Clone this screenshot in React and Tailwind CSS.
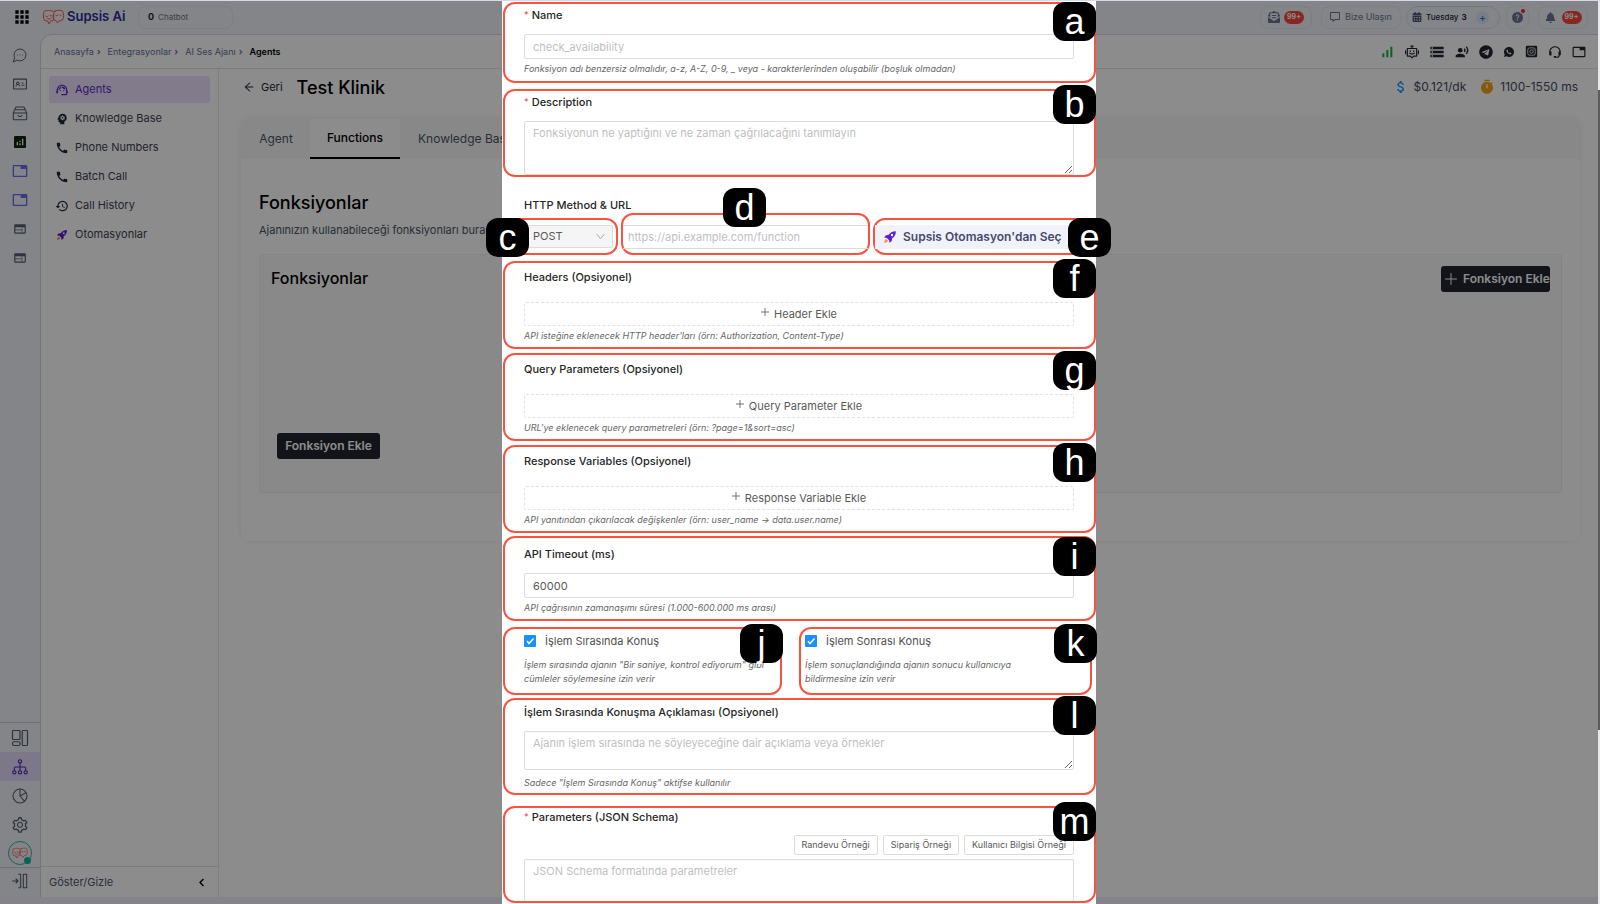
import { AiOutlineArrowLeft, AiOutlineIdcard, AiOutlineSetting } from 'react-icons/ai';
import { BiMessage, BiSupport } from 'react-icons/bi';
import { BsFillQuestionCircleFill } from 'react-icons/bs';
import { FaBell, FaCalendarAlt, FaChevronLeft, FaEnvelopeOpenText, FaInstagramSquare, FaTelegram } from 'react-icons/fa';
import { LuMessageCircleMore } from 'react-icons/lu';
import {
    MdAnalytics,
    MdApps,
    MdAttachMoney,
    MdCall,
    MdHistory,
    MdPsychology,
    MdRecordVoiceOver,
    MdSignalCellularAlt,
    MdStorage,
    MdSupportAgent,
    MdTab,
    MdWeb,
} from 'react-icons/md';
import { RiTimerFill, RiWhatsappFill } from 'react-icons/ri';

function Rocket({ className }) {
    return (
        <svg viewBox="0 0 24 24" className={className} aria-hidden="true">
            <path d="M22 2c-6 0-10 2.5-12.600 6.500L5 9 2 13l4.500.6 4 4L11 22l4-3 .5-4.500C19.500 12 22 8 22 2Z" fill="#5b1fd6" />
            <circle cx="15.500" cy="8.500" r="2" fill="#fff" />
            <path d="M5.500 15.500C3 16.500 2.500 19 2 22c3-.5 5.500-1 6.500-3.500Z" fill="#f59331" />
        </svg>
    );
}

function Faces({ className }) {
    return (
        <svg viewBox="0 0 44 32" className={className} fill="none" stroke="#f4604c" strokeWidth="2" strokeLinejoin="round" strokeLinecap="round" aria-hidden="true">
            <path d="M22 5C16 2 8 3 4 4 1 8 1 18 4 23l6 1 3 6 3-6 5-1c2-4 2-8 1-12" />
            <path d="M25 4c5-2 12-2 15 0 3 5 3 13 0 18l-7 2-3 4-2-4-5-2c-3-5-2-13 2-18Z" />
            <path d="M6 14c1 2 4 2 5 0M15 13c1 2 3 2 4 0M10 19c2 2 5 2 7-1M26 12c1 2 4 2 5 0M34 12c1 2 3 2 4 0" />
        </svg>
    );
}

function Line({ className, children }) {
    return (
        <svg viewBox="0 0 24 24" className={className} fill="none" stroke="currentColor" strokeWidth="1.600" strokeLinecap="round" strokeLinejoin="round" aria-hidden="true">
            {children}
        </svg>
    );
}

const railTop = [
    { label: 'Mesajlar', icon: <LuMessageCircleMore className="size-4 stroke-[1.5]" /> },
    { label: 'Kişiler', icon: <AiOutlineIdcard className="size-4" /> },
    {
        label: 'Arşiv',
        icon: (
            <Line className="size-4">
                <path d="M6 3h12M4 7h16M2 12h20v9a1 1 0 0 1-1 1H3a1 1 0 0 1-1-1ZM2 12l2-5M22 12l-2-5M6 3 4 7M18 3l2 4M9 16c1 1.500 5 1.500 6 0" />
            </Line>
        ),
    },
    { label: 'Raporlar', icon: <MdAnalytics className="size-4 text-[#10240c]" /> },
    { label: 'Sekme 1', icon: <MdTab className="size-4 text-[#6a6ae8]" /> },
    { label: 'Sekme 2', icon: <MdTab className="size-4 text-[#6a6ae8]" /> },
    { label: 'Web 1', icon: <MdWeb className="size-[14px]" /> },
    { label: 'Web 2', icon: <MdWeb className="size-[14px]" /> },
];

const railBottom = [
    {
        label: 'Panel',
        icon: (
            <Line className="size-[18px]">
                <rect x="2" y="2" width="10" height="12" rx="1" />
                <rect x="2" y="17" width="10" height="5" rx="2" />
                <rect x="15" y="2" width="7" height="20" rx="1" />
            </Line>
        ),
    },
    {
        label: 'Entegrasyonlar',
        active: true,
        icon: (
            <Line className="size-4">
                <circle cx="12" cy="3.500" r="2.500" />
                <circle cx="3.500" cy="20" r="2.500" />
                <circle cx="12" cy="20" r="2.500" />
                <circle cx="20.500" cy="20" r="2.500" />
                <path d="M12 6v11.500M3.500 17.500V14q0-2 2-2h13q2 0 2 2v3.500" />
            </Line>
        ),
    },
    {
        label: 'İstatistik',
        icon: (
            <Line className="size-4">
                <circle cx="12" cy="12" r="10.500" />
                <path d="M12 1.500V12l7 8M12 12l9-5" />
            </Line>
        ),
    },
    { label: 'Ayarlar', icon: <AiOutlineSetting className="size-[18px]" /> },
];

const menu = [
    { label: 'Agents', icon: <MdSupportAgent className="size-[14px]" />, active: true },
    { label: 'Knowledge Base', icon: <MdPsychology className="size-[14px] text-gray-800" /> },
    { label: 'Phone Numbers', icon: <MdCall className="size-[14px] text-gray-800" /> },
    { label: 'Batch Call', icon: <MdCall className="size-[14px] text-gray-800" /> },
    { label: 'Call History', icon: <MdHistory className="size-[14px] text-gray-800" /> },
    { label: 'Otomasyonlar', icon: <Rocket className="size-3" /> },
];

function TopBar() {
    const pill = 'flex h-[23px] items-center rounded-lg border border-[#e3e7ee]';
    return (
        <header className="flex h-[34px] shrink-0 items-center pr-3 pl-3">
            <button aria-label="Uygulamalar">
                <MdApps className="size-5 text-black" />
            </button>
            <a href="#" className="ml-[10px] flex w-[84px] items-center gap-[2px] whitespace-nowrap">
                <Faces className="h-4 w-[23px]" />
                <span className="text-[13px] font-semibold text-[#2d2a9f]">Supsis Ai</span>
            </a>
            <div className={`${pill} ml-[12px] w-[95px] gap-1 px-[9px] text-[8px] text-gray-500`}>
                <b className="text-[9px] font-bold text-gray-800">0</b> Chatbot
            </div>
            <div className="ml-auto flex items-center gap-[9px] text-[#6c7690]">
                <button className={`${pill} w-[52px] justify-center gap-1`} aria-label="Gelen kutusu">
                    <FaEnvelopeOpenText className="size-3" />
                    <Count />
                </button>
                <button className={`${pill} w-[80px] gap-1 pl-[7px] text-[9px]`}>
                    <BiMessage className="size-3" />
                    Bize Ulaşın
                </button>
                <button className="-ml-[4px] flex h-[23px] w-[94px] items-center gap-1 rounded-full border border-[#d3dfee] pl-[5px] text-[8px] font-medium text-gray-800">
                    <FaCalendarAlt className="size-[10px] text-[#4b5672]" />
                    Tuesday <b className="-ml-px">3</b>
                    <span className="ml-auto mr-[10px] flex size-[13px] items-center justify-center rounded-full bg-[#dbe7fa] text-[10px] text-[#3d6bb8]">+</span>
                </button>
                <button className={`${pill} relative -ml-[3px] w-[23px] justify-center`} aria-label="Yardım">
                    <BsFillQuestionCircleFill className="size-[11px]" />
                    <span className="absolute top-[2px] right-[3px] size-1 rounded-full bg-[#f5222d]" />
                </button>
                <button className={`${pill} w-[50px] justify-center gap-[6px]`} aria-label="Bildirimler">
                    <FaBell className="size-[11px]" />
                    <Count />
                </button>
            </div>
        </header>
    );
}

function Count() {
    return <span className="flex h-[13px] w-5 items-center justify-center rounded-full bg-[#f5483f] text-[7px] font-bold text-white">99+</span>;
}

function Rail() {
    return (
        <nav className="flex w-10 shrink-0 flex-col text-[#555d70]">
            <ul className="pt-[6px]">
                {railTop.map((item) => (
                    <li key={item.label}>
                        <a href="#" aria-label={item.label} className="flex h-[29px] items-center justify-center">
                            {item.icon}
                        </a>
                    </li>
                ))}
            </ul>
            <ul className="mt-auto border-t border-[#c9cdd6]">
                {railBottom.map((item) => (
                    <li key={item.label}>
                        <a
                            href="#"
                            aria-label={item.label}
                            className={`flex h-[29px] items-center justify-center ${item.active ? 'bg-[#e2d9f9] text-[#4a24b8]' : ''}`}
                        >
                            {item.icon}
                        </a>
                    </li>
                ))}
                <li className="flex h-[28px] items-center justify-center">
                    <span className="relative flex size-6 items-center justify-center rounded-full border border-[#2cb5a0]">
                        <Faces className="h-3 w-4" />
                        <span className="absolute right-0 bottom-0 size-[7px] rounded-full bg-[#12b39c]" />
                    </span>
                </li>
            </ul>
            <a href="#" aria-label="Menüyü daralt" className="flex h-[30px] items-center justify-center border-t border-[#c9cdd6] pb-1">
                <Line className="size-4">
                    <path d="M1 12h8M6 9l3 3-3 3M10 2h3v20h-3M17 2h5v20h-5Z" />
                </Line>
            </a>
        </nav>
    );
}

function SideMenu() {
    return (
        <aside className="flex w-[178px] shrink-0 flex-col border-r border-[#e6e8ec]">
            <ul className="flex flex-col gap-[2px] px-2 pt-[7px]">
                {menu.map((item) => (
                    <li key={item.label}>
                        <a
                            href="#"
                            className={`flex h-[27px] items-center gap-[6px] rounded-[3px] pl-[6px] text-[11px] ${item.active ? 'bg-[#ebe1fd] text-[#5a28c4]' : 'text-[#3c4250]'}`}
                        >
                            <span className="flex w-[14px] justify-center">{item.icon}</span>
                            {item.label}
                        </a>
                    </li>
                ))}
            </ul>
            <button className="mt-auto flex h-[31px] items-center justify-between border-t border-[#dfe2e8] pr-3 pl-2 text-[11px] text-[#4d5873]">
                Göster/Gizle
                <FaChevronLeft className="size-[9px] text-black" />
            </button>
        </aside>
    );
}

function Workspace() {
    return (
        <main className="min-w-0 flex-1 pr-5 pl-[22px]">
            <div className="flex h-[50px] items-start pt-[6px]">
                <div className="flex h-6 items-center">
                    <button className="flex items-center gap-[6px] pl-[2px] text-[11px] text-gray-800">
                        <AiOutlineArrowLeft className="size-3" />
                        Geri
                    </button>
                    <h1 className="ml-[14px] text-[18px] font-medium">Test Klinik</h1>
                </div>
                <div className="ml-auto flex h-6 items-center pr-[2px] text-[12px] text-[#454b60]">
                    <MdAttachMoney className="size-4 text-[#1890ff]" />
                    <span className="ml-[5px]">$0.121/dk</span>
                    <RiTimerFill className="ml-[13px] size-4 text-[#f5a516]" />
                    <span className="ml-[5px]">1100-1550 ms</span>
                </div>
            </div>
            <section className="overflow-hidden rounded-lg shadow-[0_0_6px_rgba(0,0,0,0.07)]">
                <div role="tablist" className="flex h-10 bg-[#f8f8f8] text-[12px] text-gray-600">
                    <button role="tab" className="w-[69px] pl-px">Agent</button>
                    <button role="tab" aria-selected="true" className="w-[90px] border-b-2 border-black bg-white font-medium text-black">
                        Functions
                    </button>
                    <button role="tab" className="px-[18px]">Knowledge Base</button>
                </div>
                <div className="px-[18px] pt-[30px] pb-12">
                    <h2 className="text-[18px] leading-7 font-medium">Fonksiyonlar</h2>
                    <p className="mt-[5px] w-[226px] overflow-hidden text-[11px] leading-4 whitespace-nowrap text-gray-600">
                        Ajanınızın kullanabileceği fonksiyonları bura
                    </p>
                    <div className="mt-4 flex h-[239px] flex-col rounded-[3px] border border-[#eeeeee] bg-[#f9f9f9] p-[11px]">
                        <div className="flex items-start justify-between">
                            <h3 className="text-[16px] font-medium">Fonksiyonlar</h3>
                            <button className="flex h-[26px] w-[109px] items-center gap-[6px] overflow-hidden rounded-[3px] bg-[#22252e] pl-1 text-[12px] font-semibold whitespace-nowrap text-white">
                                <Line className="size-3 shrink-0">
                                    <path d="M12 1v22M1 12h22" strokeWidth="2" />
                                </Line>
                                Fonksiyon Ekle
                            </button>
                        </div>
                        <button className="mt-auto mb-[22px] ml-[6px] h-[26px] w-[103px] rounded-[3px] bg-[#22252e] text-[12px] font-semibold text-white">
                            Fonksiyon Ekle
                        </button>
                    </div>
                </div>
            </section>
        </main>
    );
}

function Breadcrumbs() {
    return (
        <div className="flex h-[34px] shrink-0 items-center border-b border-[#dfe2e8] pr-[14px] pl-[13px]">
            <nav className="flex items-center gap-[5px] text-[9px] text-[#65719a]">
                {['Anasayfa', 'Entegrasyonlar', 'AI Ses Ajanı'].map((crumb) => (
                    <span key={crumb} className="flex gap-[3px] pr-[2px]">
                        <a href="#">{crumb}</a>
                        <span className="font-bold">›</span>
                    </span>
                ))}
                <span className="font-semibold text-black">Agents</span>
            </nav>
            <div className="ml-auto flex items-center gap-[10px] text-[#22262f]">
                <MdSignalCellularAlt className="size-4 text-[#16b14a]" />
                <Line className="size-[14px]">
                    <path d="M4 6h16v13h-5l-3 3-3-3H4ZM12 6V2M10 2h4M1 10v5M23 10v5M8 14c2 2 6 2 8 0M9 10v1M15 10v1" strokeWidth="2" />
                </Line>
                <MdStorage className="size-4" />
                <MdRecordVoiceOver className="size-[14px]" />
                <FaTelegram className="size-[14px]" />
                <RiWhatsappFill className="size-3" />
                <FaInstagramSquare className="size-[13px]" />
                <BiSupport className="size-[14px]" />
                <MdTab className="size-[14px]" />
            </div>
        </div>
    );
}

function Marker({ letter, className = '-top-1 -right-[2px]' }) {
    return (
        <span
            className={`absolute z-10 h-[39px] w-[43px] rounded-xl bg-black text-center font-['Liberation_Sans',sans-serif] text-[36px] leading-[39px] text-white ${className}`}
        >
            {letter}
        </span>
    );
}

const frame = 'relative rounded-xl border-2 border-[#fb513f]';

function Block({ letter, marker, className, children }) {
    return (
        <div className={`${frame} ml-px pr-5 pl-[19px] ${className}`}>
            {children}
            <Marker letter={letter} className={marker} />
        </div>
    );
}

function FieldLabel({ htmlFor, required, children }) {
    return (
        <label htmlFor={htmlFor} className="flex h-[18px] items-center gap-[3px] text-[11px] font-medium text-[#262626]">
            {required && <span className="text-[9px] text-[#ff4d4f]">*</span>}
            {children}
        </label>
    );
}

function Hint({ children }) {
    return <p className="mt-[2px] text-[9px] leading-4 text-[#666666] italic">{children}</p>;
}

const box = 'block w-full rounded-[2px] border border-[#dcdcdc] bg-white px-2 text-[11px] text-[#595959] placeholder:text-[#bfbfbf]';

function AddBlock({ letter, title, action, hint, className = 'mt-1' }) {
    return (
        <Block letter={letter} className={`pt-1 pb-[3px] ${className}`}>
            <h4 className="flex h-5 items-center text-[11px] font-medium text-[#262626]">{title}</h4>
            <button type="button" className="mt-[15px] flex h-6 w-full items-center justify-center gap-[5px] rounded-[2px] border border-dashed border-[#e2e2e2] text-[11px] text-[#595959]">
                <Line className="mb-1 size-2">
                    <path d="M12 1v22M1 12h22" strokeWidth="2.500" />
                </Line>
                {action}
            </button>
            <Hint>{hint}</Hint>
        </Block>
    );
}

function Tick({ id, label, children }) {
    return (
        <>
            <div className="flex h-5 items-center gap-[9px] text-[11px] text-[#505050]">
                <span className="relative flex size-3">
                    <input id={id} type="checkbox" defaultChecked className="size-3 appearance-none rounded-[1px] bg-[#1890ff]" />
                    <svg viewBox="0 0 12 12" className="pointer-events-none absolute inset-0 size-3" fill="none" stroke="#fff" strokeWidth="1.500">
                        <path d="M3 6l2 2.500L9.500 3.500" />
                    </svg>
                </span>
                <label htmlFor={id}>{label}</label>
            </div>
            <p className="mt-[7px] text-[9px] leading-[14px] text-[#666666] italic">{children}</p>
        </>
    );
}

function FunctionForm() {
    return (
        <form className="h-full w-full max-w-[594px] bg-white pt-px">
            <Block letter="a" marker="-top-[2px] -right-[2px]" className="pt-[2px] pb-1">
                <FieldLabel htmlFor="name" required>Name</FieldLabel>
                <input id="name" placeholder="check_availability" className={`${box} mt-[10px] h-[25px]`} />
                <Hint>Fonksiyon adı benzersiz olmalıdır, a-z, A-Z, 0-9, _ veya - karakterlerinden oluşabilir (boşluk olmadan)</Hint>
            </Block>
            <Block letter="b" className="mt-[6px] pt-[2px]" marker="-top-[6px] -right-[2px]">
                <FieldLabel htmlFor="description" required>Description</FieldLabel>
                <textarea id="description" placeholder="Fonksiyonun ne yaptığını ve ne zaman çağrılacağını tanımlayın" className={`${box} mt-[10px] h-[54px] pt-[3px]`} />
            </Block>

            <label htmlFor="url" className="mt-[18px] ml-[22px] block h-[18px] text-[11px] leading-5 font-medium text-[#262626]">
                HTTP Method &amp; URL
            </label>
            <div className="ml-px flex items-end gap-[3px]">
                <div className={`${frame} h-[37px] w-[115px] pt-[5px] pr-[3px] pl-[19px]`}>
                    <div className="relative">
                        <select aria-label="HTTP Method" className="block h-[23px] w-full appearance-none rounded-[2px] border border-[#dcdcdc] bg-[#f5f5f5] pl-2 text-[11px] text-[#595959]">
                            <option>POST</option>
                            <option>GET</option>
                        </select>
                        <Line className="pointer-events-none absolute top-[7px] right-2 size-[9px] text-[#a6a6a6]">
                            <path d="M2 6l10 12L22 6" strokeWidth="2.500" />
                        </Line>
                    </div>
                    <Marker letter="c" className="-top-[2px] -left-[19px]" />
                </div>
                <div className={`${frame} h-[42px] w-[249px] pt-[10px]`}>
                    <input
                        id="url"
                        placeholder="https://api.example.com/function"
                        className="block h-6 w-full border-y border-[#dcdcdc] px-[5px] text-[11px] placeholder:text-[#bfbfbf]"
                    />
                    <Marker letter="d" className="-top-[27px] left-[100px]" />
                </div>
                <div className={`${frame} h-[37px] flex-1 pt-[5px] pr-5`}>
                    <button type="button" className="flex h-6 w-full items-center gap-[6px] bg-[#f1f2f9] pl-2 text-[12px] font-semibold whitespace-nowrap text-[#454a6b]">
                        <Rocket className="size-[14px]" />
                        Supsis Otomasyon'dan Seç
                    </button>
                    <Marker letter="e" className="-top-[2px] -right-[17px]" />
                </div>
            </div>

            <AddBlock letter="f" className="mt-[6px]" title="Headers (Opsiyonel)" action="Header Ekle" hint="API isteğine eklenecek HTTP header'ları (örn: Authorization, Content-Type)" />
            <AddBlock letter="g" title="Query Parameters (Opsiyonel)" action="Query Parameter Ekle" hint="URL'ye eklenecek query parametreleri (örn: ?page=1&sort=asc)" />
            <AddBlock letter="h" title="Response Variables (Opsiyonel)" action="Response Variable Ekle" hint="API yanıtından çıkarılacak değişkenler (örn: user_name → data.user.name)" />

            <Block letter="i" marker="-top-px -right-[2px]" className="mt-[3px] pt-[7px] pb-[3px]">
                <FieldLabel htmlFor="timeout">API Timeout (ms)</FieldLabel>
                <input id="timeout" defaultValue="60000" className={`${box} mt-[10px] h-[25px]`} />
                <Hint>API çağrısının zamanaşımı süresi (1.000-600.000 ms arası)</Hint>
            </Block>

            <div className="mt-[6px] ml-px flex gap-[17px]">
                <div className={`${frame} w-[279px] pt-[2px] pr-1 pb-[7px] pl-[19px]`}>
                    <Tick id="speak-during" label="İşlem Sırasında Konuş">
                        İşlem sırasında ajanın "Bir saniye, kontrol ediyorum" gibi cümleler söylemesine izin verir
                    </Tick>
                    <Marker letter="j" className="-top-[5px] -right-[3px]" />
                </div>
                <div className={`${frame} w-[293px] pt-[2px] pr-[60px] pb-[7px] pl-1`}>
                    <Tick id="speak-after" label="İşlem Sonrası Konuş">
                        İşlem sonuçlandığında ajanın sonucu kullanıcıya bildirmesine izin verir
                    </Tick>
                    <Marker letter="k" className="-top-[5px] -right-[7px]" />
                </div>
            </div>

            <Block letter="l" className="mt-[3px] pt-[3px] pb-[2px]">
                <FieldLabel htmlFor="speech">İşlem Sırasında Konuşma Açıklaması (Opsiyonel)</FieldLabel>
                <textarea id="speech" placeholder="Ajanın işlem sırasında ne söyleyeceğine dair açıklama veya örnekler" className={`${box} mt-[10px] mb-[5px] h-[39px] pt-[3px]`} />
                <Hint>Sadece "İşlem Sırasında Konuş" aktifse kullanılır</Hint>
            </Block>

            <Block letter="m" marker="-top-[6px] -right-[2px]" className="mt-[11px]">
                <FieldLabel htmlFor="schema" required>Parameters (JSON Schema)</FieldLabel>
                <div className="mt-[9px] flex justify-end gap-[5px] text-[9px] text-[#595959]">
                    {['Randevu Örneği', 'Sipariş Örneği', 'Kullanıcı Bilgisi Örneği'].map((name) => (
                        <button key={name} type="button" className="h-5 rounded-[2px] border border-[#dcdcdc] px-[7px]">
                            {name}
                        </button>
                    ))}
                </div>
                <textarea id="schema" placeholder="JSON Schema formatında parametreler" className={`${box} mt-1 h-[42px] resize-none border-b-0 pt-[3px]`} />
            </Block>
        </form>
    );
}

export default function App() {
    return (
        <div className="relative flex h-screen flex-col overflow-hidden bg-[#eff2f7] font-[Inter,'Noto_Sans',sans-serif] text-black">
            <TopBar />
            <div className="flex min-h-0 flex-1">
                <Rail />
                <div className="flex min-w-0 flex-1 flex-col rounded-tl-xl border-t border-l border-[#d4d8e0] bg-white">
                    <Breadcrumbs />
                    <div className="flex min-h-0 flex-1">
                        <SideMenu />
                        <Workspace />
                    </div>
                </div>
            </div>
            <footer className="h-[7px] shrink-0 bg-[#eeeef9]" />

            <div role="dialog" aria-modal="true" className="absolute inset-0 flex flex-col border-t border-[#d5d9ea] bg-black/45">
                <div className="flex min-h-0 flex-1">
                    <div className="flex flex-1 justify-center">
                        <FunctionForm />
                    </div>
                    <div className="w-[2px] bg-[#e8e8e8] pt-[89px]">
                        <div className="h-[640px] bg-[#5c5c5c]" />
                    </div>
                </div>
            </div>
        </div>
    );
}
